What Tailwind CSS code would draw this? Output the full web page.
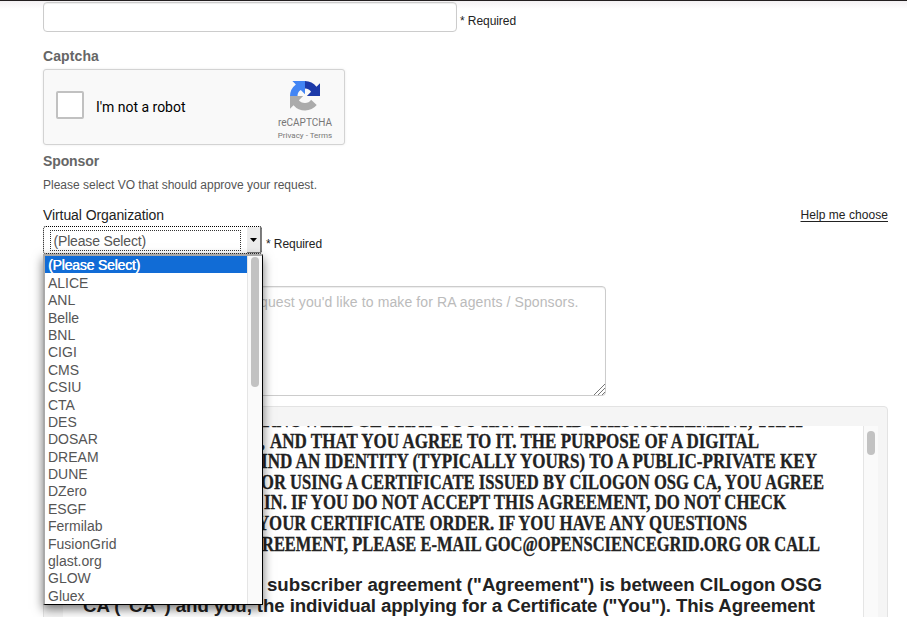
<!DOCTYPE html>
<html lang="en">
<head>
<meta charset="utf-8">
<title>Certificate Request</title>
<script src="https://cdn.jsdelivr.net/npm/@tailwindcss/browser@4"></script>
</head>
<body class="h-[617px] overflow-hidden bg-white font-['Liberation_Sans',Arial,sans-serif] text-[14px] leading-5 text-[#222]">
<div class="h-px bg-[#231f20]"></div>
<main class="relative h-[616px] overflow-hidden bg-linear-to-b from-[#f3f1f3] via-white via-[1.3%] to-white pl-[43px] pr-[19px] pt-px">
  <div class="flex h-[30px] items-end gap-[3px]">
    <input class="h-[30px] w-[414px] rounded-[4px] border border-[#ccc] bg-white shadow-[inset_0_1px_1px_rgba(0,0,0,0.075)]" aria-label="Contact">
    <span class="whitespace-nowrap text-[12px] leading-[22px]" data-w="56">* Required</span>
  </div>
  <h4 class="mt-[14px] h-5 font-bold text-[#666]"><span class="inline-block whitespace-nowrap" data-w="56">Captcha</span></h4>
  <section class="mt-[3px] flex h-[76px] w-[302px] rounded-[3px] border border-[#d3d3d3] bg-[#f9f9f9] pl-3 font-[Roboto,sans-serif] shadow-[0_0_3px_rgba(0,0,0,0.08)]">
    <div class="mt-[21px] h-7 w-7 shrink-0 rounded-[2px] border-2 border-[#c1c1c1] bg-white"></div>
    <div class="ml-3 mt-[27px] w-[158px] shrink-0 text-[14px] text-black"><span class="inline-block whitespace-nowrap" data-w="89.5">I'm not a robot</span></div>
    <div class="ml-3 flex w-[78px] shrink-0 flex-col items-center pt-[11px]">
      <svg class="h-[30px] w-[30px] shrink-0" viewBox="0 0 64 64">
        <path fill="#1c3aa9" d="M64 32V5l-7.500 7.500A32 32 0 0 0 32 0v16a16 16 0 0 1 8 2c2 1 4 3 5 5l-9 9z"/>
        <path fill="#4285f4" d="M32 0H5l7.500 7.500A32 32 0 0 0 0 32h16a16 16 0 0 1 2-8c1-2 3-4 5-5l9 9z"/>
        <path fill="#ababab" d="M0 32v27l7.500-7.500A32 32 0 0 0 57 51L45 40a16 16 0 0 1-13 7c-6 0-11-3-13-6l9-9z"/>
      </svg>
      <span class="mt-[6px] whitespace-nowrap text-[10px] leading-3 text-[#777]" data-w="54">reCAPTCHA</span>
      <span class="mt-[2px] whitespace-nowrap text-[8px] leading-[10px] text-[#777]" data-w="54.500">Privacy - Terms</span>
    </div>
  </section>
  <h4 class="mt-[6px] h-5 font-bold text-[#666]"><span class="inline-block whitespace-nowrap" data-w="56">Sponsor</span></h4>
  <p class="mt-1 h-5 text-[12px] text-[#555]"><span class="inline-block whitespace-nowrap" data-w="274">Please select VO that should approve your request.</span></p>
  <div class="mt-[10px] flex h-5 justify-between">
    <label class="whitespace-nowrap" data-w="121">Virtual Organization</label>
    <a class="whitespace-nowrap text-[12px] underline underline-offset-[2px]" data-w="87.500">Help me choose</a>
  </div>
  <div class="mt-px flex h-7 gap-1">
    <div class="flex w-[219px] justify-between rounded-[3px] border border-dotted border-black bg-white pl-[6px]">
      <div class="mt-[3px] h-[21px] w-[191px] border border-dotted border-[#333] pl-[2.500px] leading-[21px] text-[#555]"><span class="inline-block whitespace-nowrap" data-w="92.500">(Please Select)</span></div>
      <div class="flex w-[14px] items-center justify-center border-b border-r border-[#777] bg-[#ececec]"><svg class="h-1 w-[7px]" viewBox="0 0 7 4"><path d="M0 0h7L3.500 4z"/></svg></div>
    </div>
    <span class="mt-2 whitespace-nowrap text-[12px]" data-w="56">* Required</span>
  </div>
  <div class="relative mt-8 flex h-[110px] w-[563px] rounded-[4px] border border-[#ccc] bg-white pt-[5px] shadow-[inset_0_1px_1px_rgba(0,0,0,0.075)]">
    <span class="w-[216px] text-right text-[#bbb]">re</span><span class="whitespace-nowrap text-[#bbb]" data-w="318.500">quest you'd like to make for RA agents / Sponsors.</span>
    <svg class="absolute bottom-0 right-0 h-3 w-3" viewBox="0 0 12 12"><path stroke="#777" fill="none" d="M1 12L12 1M5 12l7-7M9 12l3-3"/></svg>
  </div>
  <section class="mt-[10px] h-[300px] rounded-[4px] border border-[#e3e3e3] bg-[#f5f5f5] pl-[19px] pr-[9px] pt-[19px]">
    <div class="flex h-[280px] overflow-hidden bg-white">
      <div class="h-full min-w-0 flex-1 overflow-hidden">
        <div class="-mt-[16px] font-['Liberation_Serif',serif] text-[20px] font-bold leading-[20.600px] text-[#222] [-webkit-text-stroke:0.300px_#222]">
          <p class="flex"><span class="w-[187px] shrink-0 text-right">A</span><span class="origin-left whitespace-nowrap" data-scale-w="555">CKNOWLEDGE THAT YOU HAVE READ THIS AGREEMENT, THAT</span></p>
          <p class="flex"><span class="w-[207px] shrink-0 whitespace-pre text-right">IT, </span><span class="origin-left whitespace-nowrap" data-scale-w="489">AND THAT YOU AGREE TO IT. THE PURPOSE OF A DIGITAL</span></p>
          <p class="flex"><span class="w-[198px] shrink-0 text-right">B</span><span class="origin-left whitespace-nowrap" data-scale-w="556">IND AN IDENTITY (TYPICALLY YOURS) TO A PUBLIC-PRIVATE KEY</span></p>
          <p class="flex"><span class="w-[198px] shrink-0"></span><span class="origin-left whitespace-nowrap" data-scale-w="563">OR USING A CERTIFICATE ISSUED BY CILOGON OSG CA, YOU AGREE</span></p>
          <p class="flex"><span class="w-[201px] shrink-0"></span><span class="origin-left whitespace-nowrap" data-scale-w="522">IN. IF YOU DO NOT ACCEPT THIS AGREEMENT, DO NOT CHECK</span></p>
          <p class="flex"><span class="w-[194px] shrink-0"></span><span class="origin-left whitespace-nowrap" data-scale-w="490">YOUR CERTIFICATE ORDER. IF YOU HAVE ANY QUESTIONS</span></p>
          <p class="flex"><span class="w-[199px] shrink-0 text-right">AG</span><span class="origin-left whitespace-nowrap" data-scale-w="558">REEMENT, PLEASE E-MAIL GOC@OPENSCIENCEGRID.ORG OR CALL</span></p>
        </div>
        <div class="mt-[19.400px] text-[18.660px] font-bold leading-[21px]">
          <p class="flex"><span class="w-[204px] shrink-0 whitespace-pre text-right">This </span><span class="whitespace-nowrap" data-w="555">subscriber agreement ("Agreement") is between CILogon OSG</span></p>
          <p class="pl-5"><span class="inline-block whitespace-nowrap" data-w="732">CA ("CA") and you, the individual applying for a Certificate ("You"). This Agreement</span></p>
        </div>
      </div>
      <div class="w-[15px] shrink-0 border-l border-[#e5e5e5] bg-[#fafafa] pl-[3px] pt-[5px]"><div class="h-6 w-2 rounded-full bg-[#c2c2c2]"></div></div>
    </div>
  </section>
  <div class="absolute left-[43px] top-[253px] flex h-[351px] w-[220px] border-2 border-b-[1px] border-r-[1px] border-b-black border-l-[#a9a9a9] border-r-black border-t-[#a9a9a9] bg-white shadow-[0_4px_10px_rgba(0,0,0,0.55)]">
    <ul class="w-[202px] overflow-hidden leading-[19px] text-[#555]">
      <li class="mb-[0.400px] h-[17.400px] bg-[#116cd6] pl-[3px] text-white [text-shadow:0.400px_0_0_white]"><span class="inline-block whitespace-nowrap" data-w="92">(Please Select)</span></li>
      <li class="h-[17.400px] pl-[3px]">ALICE</li>
      <li class="h-[17.400px] pl-[3px]">ANL</li>
      <li class="h-[17.400px] pl-[3px]">Belle</li>
      <li class="h-[17.400px] pl-[3px]">BNL</li>
      <li class="h-[17.400px] pl-[3px]">CIGI</li>
      <li class="h-[17.400px] pl-[3px]">CMS</li>
      <li class="h-[17.400px] pl-[3px]">CSIU</li>
      <li class="h-[17.400px] pl-[3px]">CTA</li>
      <li class="h-[17.400px] pl-[3px]">DES</li>
      <li class="h-[17.400px] pl-[3px]">DOSAR</li>
      <li class="h-[17.400px] pl-[3px]">DREAM</li>
      <li class="h-[17.400px] pl-[3px]">DUNE</li>
      <li class="h-[17.400px] pl-[3px]">DZero</li>
      <li class="h-[17.400px] pl-[3px]">ESGF</li>
      <li class="h-[17.400px] pl-[3px]">Fermilab</li>
      <li class="h-[17.400px] pl-[3px]">FusionGrid</li>
      <li class="h-[17.400px] pl-[3px]">glast.org</li>
      <li class="h-[17.400px] pl-[3px]">GLOW</li>
      <li class="h-[17.400px] pl-[3px]">Gluex</li>
    </ul>
    <div class="w-[15px] border-l border-[#e5e5e5] bg-[#fafafa] pl-[3px] pt-px"><div class="h-[130px] w-2 rounded-full bg-[#c2c2c2]"></div></div>
  </div>
</main>
<script>
// Track each label so that its line spans the width given in data-w;
// condense the serif lines to the width given in data-scale-w.
function fitLabels() {
  document.querySelectorAll('[data-w]').forEach(function (el) {
    el.style.letterSpacing = '0px';
    var range = document.createRange();
    range.selectNodeContents(el);
    var width = range.getBoundingClientRect().width;
    el.style.letterSpacing = (el.dataset.w - width) / el.textContent.length + 'px';
  });
  document.querySelectorAll('[data-scale-w]').forEach(function (el) {
    el.style.transform = 'none';
    var range = document.createRange();
    range.selectNodeContents(el);
    el.style.transform = 'scaleX(' + el.dataset.scaleW / range.getBoundingClientRect().width + ')';
  });
}
window.addEventListener('load', fitLabels);
document.fonts.ready.then(fitLabels);
</script>
</body>
</html>
